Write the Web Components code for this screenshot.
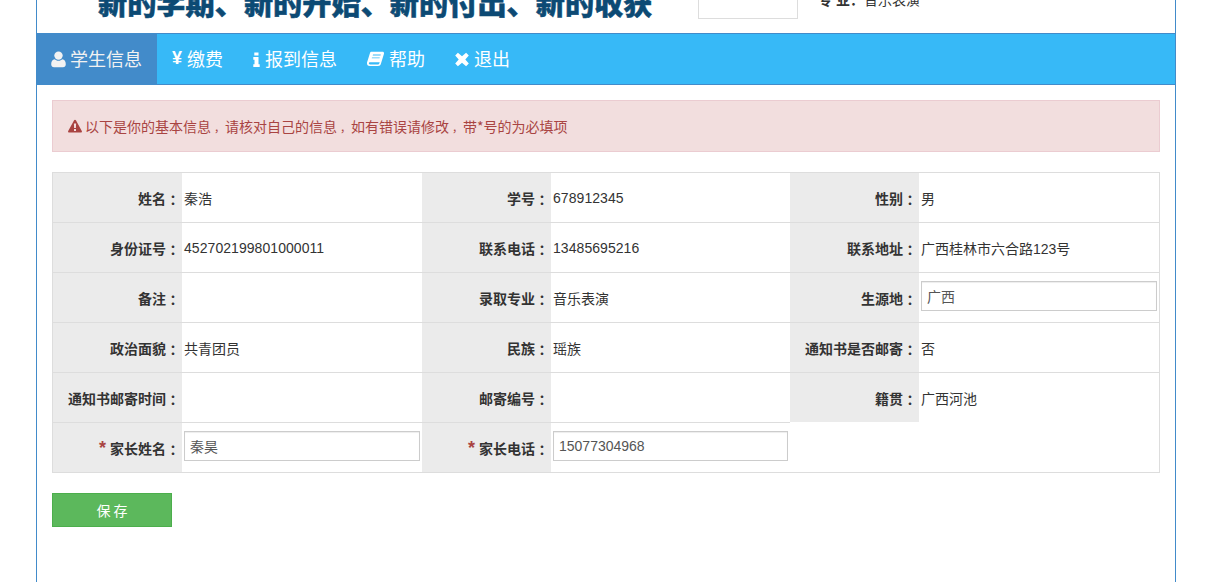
<!DOCTYPE html>
<html lang="zh"><head><meta charset="utf-8">
<style>
html,body{margin:0;padding:0;background:#fff;height:582px;overflow:hidden}
body{font-family:"Liberation Sans","Noto Sans CJK SC",sans-serif;font-size:14px;color:#333}
.c{font-family:"Noto Sans CJK TC",sans-serif}
.k{display:inline-block;width:14px;text-align:right;font-size:11px;line-height:14px}
</style></head><body>
<x-page>
  <x-header slot="header"></x-header>
  <x-nav slot="nav">
    <x-nav-item active icon="user">学生信息</x-nav-item>
    <x-nav-item icon="yen">缴费</x-nav-item>
    <x-nav-item icon="info">报到信息</x-nav-item>
    <x-nav-item icon="book">帮助</x-nav-item>
    <x-nav-item icon="times">退出</x-nav-item>
  </x-nav>
  <x-alert>以下是你的基本信息<span class="k">，</span>请核对自己的信息<span class="k">，</span>如有错误请修改<span class="k">，</span>带*号的为必填项</x-alert>
  <x-info-table>
    <x-cell label>姓名<span class="c">：</span></x-cell><x-cell>秦浩</x-cell>
    <x-cell label>学号<span class="c">：</span></x-cell><x-cell flat num>678912345</x-cell>
    <x-cell label>性别<span class="c">：</span></x-cell><x-cell>男</x-cell>

    <x-cell label>身份证号<span class="c">：</span></x-cell><x-cell flat num>452702199801000011</x-cell>
    <x-cell label>联系电话<span class="c">：</span></x-cell><x-cell flat num>13485695216</x-cell>
    <x-cell label>联系地址<span class="c">：</span></x-cell><x-cell>广西桂林市六合路123号</x-cell>

    <x-cell label>备注<span class="c">：</span></x-cell><x-cell></x-cell>
    <x-cell label>录取专业<span class="c">：</span></x-cell><x-cell>音乐表演</x-cell>
    <x-cell label>生源地<span class="c">：</span></x-cell><x-cell flat><x-input value="广西"></x-input></x-cell>

    <x-cell label>政治面貌<span class="c">：</span></x-cell><x-cell>共青团员</x-cell>
    <x-cell label>民族<span class="c">：</span></x-cell><x-cell>瑶族</x-cell>
    <x-cell label>通知书是否邮寄<span class="c">：</span></x-cell><x-cell>否</x-cell>

    <x-cell label>通知书邮寄时间<span class="c">：</span></x-cell><x-cell></x-cell>
    <x-cell label>邮寄编号<span class="c">：</span></x-cell><x-cell></x-cell>
    <x-cell label>籍贯<span class="c">：</span></x-cell><x-cell>广西河池</x-cell>

    <x-cell label required>家长姓名<span class="c">：</span></x-cell><x-cell flat><x-input value="秦昊"></x-input></x-cell>
    <x-cell label required>家长电话<span class="c">：</span></x-cell><x-cell flat><x-input value="15077304968"></x-input></x-cell>
    <x-cell blank></x-cell><x-cell blank></x-cell>
  </x-info-table>
  <x-button>保 存</x-button>
</x-page>
<script>
const ICONS={
 user:'<svg width="15" height="18" viewBox="0 0 15 18"><circle cx="7.5" cy="5.6" r="4.2" fill="currentColor"/><path d="M.2 14.2C.2 11.5 1.5 9.2 3.6 9.2c1 .9 2.3 1.5 3.9 1.5s2.9-.6 3.9-1.5c2.100 0 3.400 2.300 3.400 5 0 1.900-1.200 3-2.800 3H3C1.400 17.200.2 16.100.2 14.200z" fill="currentColor"/></svg>',
 yen:'<span style="font:bold 18px/18px \'Liberation Sans\';display:block;width:11px;transform:translateY(-1px)">¥</span>',
 info:'<svg width="8" height="18" viewBox="0 0 8 18"><path d="M1.800 2.400h4.200v3.200H1.800zM.8 7h5.200v7.300h1.200v2.700H.8v-2.700h1.200V9.700H.8z" fill="currentColor" transform="translate(-.5 0)"/></svg>',
 book:'<svg width="18" height="18" viewBox="0 0 18 18"><path fill-rule="evenodd" d="M5 1.800h11c1.200 0 1.800.9 1.400 2.100l-3 9.800c-.4 1.300-1.300 2.300-2.900 2.300H3.200C1.400 16 .2 14.600.5 12.600.6 12 .8 11.500 1 11l2.500-8c.2-.7.800-1.200 1.500-1.200zM6.500 4.600l-.3.900h7.800l.3-.9zM5.500 7.400l-.3.900h7.800l.3-.9zM3.600 12.200c-.8 0-1.200.5-1.200 1.100s.4 1.100 1.100 1.100h8.300c.5 0 .8-.3 1-.8l.4-1.400z" fill="currentColor" transform="translate(-.5 0)"/></svg>',
 times:'<svg width="15" height="18" viewBox="0 0 15 18"><path d="M3.400 3.800L7.500 7.200l4.100-3.400 2.700 2.700L10.800 10.500l3.500 4-2.700 2.700-4.100-3.500-4.100 3.500-2.700-2.700 3.500-4L.7 6.500z" fill="currentColor" transform="translate(-.5 -1)"/></svg>'
};
function define(name,html,init){
  customElements.define(name,class extends HTMLElement{
    constructor(){super();this.attachShadow({mode:'open'}).innerHTML=html;}
    connectedCallback(){init&&init(this,this.shadowRoot);}
  });
}
define('x-page',`<style>
:host{display:block;width:1138px;height:582px;margin-left:36px;border-left:1px solid #428bca;border-right:1px solid #428bca;box-sizing:content-box;overflow:hidden}
.body{padding:15px;display:flex;flex-direction:column;align-items:stretch}
</style><slot name="header"></slot><slot name="nav"></slot><div class="body"><slot></slot></div>`);
define('x-header',`<style>
:host{display:flex;height:33px;overflow:hidden;align-items:flex-end;background:#fff}
.slogan{width:661px;height:100%;padding-left:61px;box-sizing:border-box;overflow:hidden;display:flex;align-items:flex-end;
 font:900 29.2px/29px "Noto Sans CJK SC",sans-serif;color:#0c4a74;white-space:nowrap;-webkit-text-stroke:.5px #0c4a74}
.slogan span{margin-bottom:17px;display:block;line-height:29px}
.photo{width:100px;height:60px;margin-bottom:14px;box-sizing:border-box;border:1px solid #ddd;flex:none}
.major{margin-left:20px;margin-bottom:23px;font:14px/20px "Liberation Sans","Noto Sans CJK SC",sans-serif;color:#333;white-space:pre}
.major i{font-style:normal;font-family:"Noto Sans CJK TC",sans-serif}
</style><div class="slogan"><span>新的学期、新的开始、新的付出、新的收获</span></div><div class="photo"></div><div class="major"><b>专 业<i>：</i></b>音乐表演</div>`);
define('x-nav',`<style>
:host{display:flex;height:50px;background:#37b9f7;border-top:1px solid #428bca;border-bottom:1px solid #428bca}
</style><slot></slot>`);
define('x-nav-item',`<style>
:host{display:flex;align-items:center;gap:4px;padding:0 15px;height:50px;color:#fff;font:18px/46px "Noto Sans CJK SC",sans-serif;white-space:nowrap}
:host([active]){background:#428bca;color:#f2f2f2;padding-left:14px}
.i{display:flex;align-items:center;height:18px;flex:none}
.t{padding-bottom:2px}
</style><span class="i"></span><span class="t"><slot></slot></span>`,(el,r)=>{r.querySelector('.i').innerHTML=ICONS[el.getAttribute('icon')];});
define('x-alert',`<style>
:host{display:flex;align-items:center;gap:3px;height:52px;box-sizing:border-box;padding:0 15px;background:#f2dede;border:1px solid #ebccd1;color:#a94442;font:14px/20px "Noto Sans CJK SC",sans-serif;white-space:nowrap;margin-bottom:20px}
svg{flex:none}
</style><svg width="14" height="14" viewBox="0 0 14 14"><path fill-rule="evenodd" d="M7 .8c.4 0 .7.2.9.500l5.900 10.800c.4.700-.1 1.500-.9 1.500H1.100c-.8 0-1.300-.8-.9-1.500L6.100 1.300C6.300 1 6.600.8 7 .8zM5.900 4.500l.2 4.500h1.800l.2-4.500zM6 10v1.900h2V10z" fill="currentColor"/></svg><span><slot></slot></span>`);
define('x-info-table',`<style>
:host{display:grid;grid-template-columns:129px 240px 129px 239px 129px 240px;grid-auto-rows:50px;
 border:1px solid #ddd;border-top:0;margin-bottom:20px;width:1106px}
</style><slot></slot>`);
define('x-cell',`<style>
:host{display:flex;align-items:center;box-sizing:border-box;border-top:1px solid #ddd;font:14px/20px "Liberation Sans","Noto Sans CJK SC",sans-serif;color:#333;padding:2px 2px 0;min-width:0;white-space:nowrap}
:host([flat]){padding-top:0}
:host([num]){letter-spacing:.06px}
:host([label]){justify-content:flex-end;font-weight:bold;background:#ebebeb}
:host([blank]){border-top:0;background:#fff}
.s{display:none;color:#a94442;font-size:18px;line-height:14px;margin-right:4px;font-weight:bold;align-self:center;transform:translateY(-1px)}
:host([required]) .s{display:inline}
</style><span class="s">*</span><slot></slot>`);
define('x-input',`<style>
:host{display:block;flex:1;margin-bottom:4px}
input{display:block;width:100%;height:30px;box-sizing:border-box;border:1px solid #ccc;padding:0 5px;margin:0;border-radius:0;outline:0;color:#555;font:14px "Liberation Sans","Noto Sans CJK SC",sans-serif;box-shadow:inset 0 1px 1px rgba(0,0,0,.075);background:#fff}
</style><input>`,(el,r)=>{r.querySelector('input').setAttribute('value',el.getAttribute('value'));});
define('x-button',`<style>
:host{display:flex;align-items:center;justify-content:center;width:120px;height:34px;box-sizing:border-box;background:#5cb85c;border:1px solid #4cae4c;color:#fff;font:14px/20px "Noto Sans CJK SC",sans-serif;white-space:pre}
</style><slot></slot>`);
</script>
</body></html>
